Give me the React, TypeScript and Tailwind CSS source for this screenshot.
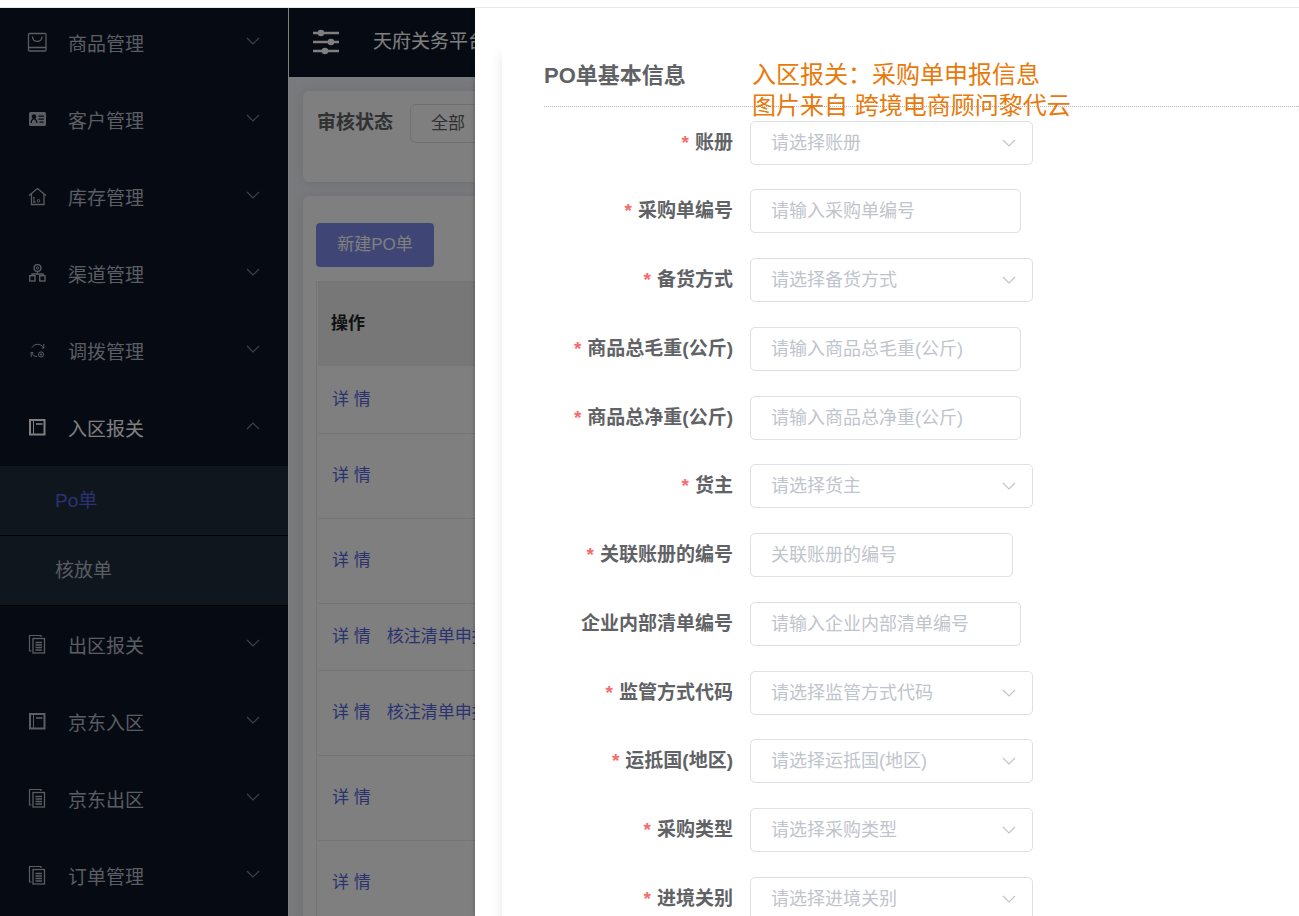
import { ReactNode } from "react";

type MenuItem = {
  label: string;
  icon: ReactNode;
  open?: boolean;
};

type Field = {
  id: string;
  label: string;
  placeholder: string;
  type: "select" | "input";
  required?: boolean;
  short?: boolean;
};

const Icon = ({ children }: { children: ReactNode }) => (
  <svg
    viewBox="0 0 20 20"
    className="mb-0.5 h-5 w-5 shrink-0"
    fill="none"
    stroke="currentColor"
    aria-hidden="true"
  >
    {children}
  </svg>
);

const BagIcon = () => (
  <Icon>
    <rect x="1.500" y="1.500" width="17.500" height="17.500" rx="1" strokeWidth="1.300" />
    <path d="M1.500 15.500h17.500M5.500 4.500c0 6.500 9.500 6.500 9.500 0" strokeWidth="1.300" />
  </Icon>
);

const CardIcon = () => (
  <Icon>
    <path
      fill="currentColor"
      stroke="none"
      fillRule="evenodd"
      d="M3.500 3h14a1.500 1.500 0 0 1 1.500 1.500v11a1.500 1.500 0 0 1-1.500 1.500h-14a1.500 1.500 0 0 1-1.500-1.500v-11A1.500 1.500 0 0 1 3.500 3zM7 5.200a2.300 2.300 0 0 0-1.300 4.200C4.500 10.200 3.500 12 3.500 14h1.300c0-2.300 1-3.600 2.200-3.600s2.200 1.300 2.200 3.600h1.300c0-2-1-3.800-2.200-4.600A2.300 2.300 0 0 0 7 5.200zM11.500 6.500v1.200H17V6.500zM11.500 9.500v1.200H17V9.500zM12.500 12.500v1.200h4v-1.200z"
    />
  </Icon>
);

const HouseIcon = () => (
  <Icon>
    <path d="M2 9.500L10.500 2.500 19 9.500M4.500 8v10.500h12.500V8" strokeWidth="1.300" />
    <path d="M7 11v5.500M6 11.500h1M6 16h3" />
    <circle cx="11.500" cy="14.800" r="1.300" />
  </Icon>
);

const ChannelIcon = () => (
  <Icon>
    <circle cx="10.500" cy="5" r="3.400" strokeWidth="1.400" />
    <circle cx="10.500" cy="5" r="1.200" />
    <path d="M10.500 8.500V11M5 13v-2h11v2" strokeWidth="1.400" />
    <rect x="2.700" y="12.700" width="5.300" height="5.300" strokeWidth="1.400" />
    <rect x="12.700" y="12.700" width="5.300" height="5.300" strokeWidth="1.400" />
  </Icon>
);

const TransferIcon = () => (
  <Icon>
    <path d="M5 7.500a6.800 6.800 0 0 1 11.500 0M16.800 4v4.300M10 16.800a6.500 6.500 0 0 1-5.500-4.300M4.200 17v-5M4.200 12.500h2M14.800 8h2" />
    <circle cx="14" cy="14.500" r="2.600" />
    <circle cx="14" cy="14.500" r="0.800" />
  </Icon>
);

const BookIcon = () => (
  <Icon>
    <rect x="3" y="3" width="14.500" height="14.500" strokeWidth="2" />
    <path d="M6.500 3v14.500" strokeWidth="1" />
    <path d="M9 7h6.500" strokeWidth="1.600" />
  </Icon>
);

const CopyIcon = () => (
  <Icon>
    <path d="M14 3V1.500H2.500V17h2" strokeWidth="1.200" />
    <rect x="6" y="4.500" width="11.500" height="14.500" strokeWidth="1.300" />
    <path d="M8.500 8.500h6.500M8.500 11h6.500M8.500 13.500h6.500M8.500 16h6.500" strokeWidth="1.300" />
  </Icon>
);

const SlidersIcon = () => (
  <svg
    viewBox="0 0 26 26"
    className="mb-0.5 h-[26px] w-[26px]"
    aria-hidden="true"
  >
    <path
      d="M0 4h26M0 13h26M0 22h26"
      stroke="currentColor"
      strokeWidth="2.500"
    />
    <circle cx="8" cy="4" r="3.300" fill="currentColor" />
    <circle cx="18" cy="13" r="3.300" fill="currentColor" />
    <circle cx="12" cy="22" r="3.300" fill="currentColor" />
  </svg>
);

const Chevron = ({ className }: { className: string }) => (
  <svg
    viewBox="0 0 14 8"
    className={className}
    fill="none"
    stroke="currentColor"
    aria-hidden="true"
  >
    <path d="M1 1l6 6 6-6" strokeWidth="1.200" />
  </svg>
);

const menuTop: MenuItem[] = [
  { label: "商品管理", icon: <BagIcon /> },
  { label: "客户管理", icon: <CardIcon /> },
  { label: "库存管理", icon: <HouseIcon /> },
  { label: "渠道管理", icon: <ChannelIcon /> },
  { label: "调拨管理", icon: <TransferIcon /> },
  { label: "入区报关", icon: <BookIcon />, open: true },
];

const menuBottom: MenuItem[] = [
  { label: "出区报关", icon: <CopyIcon /> },
  { label: "京东入区", icon: <BookIcon /> },
  { label: "京东出区", icon: <CopyIcon /> },
  { label: "订单管理", icon: <CopyIcon /> },
];

const rows = [
  { tall: false, declare: false },
  { tall: true, declare: false },
  { tall: true, declare: false },
  { tall: false, declare: true },
  { tall: true, declare: true },
  { tall: true, declare: false },
  { tall: true, declare: false },
];

const fields: Field[] = [
  { id: "book", label: "账册", placeholder: "请选择账册", type: "select", required: true },
  { id: "poNo", label: "采购单编号", placeholder: "请输入采购单编号", type: "input", required: true },
  { id: "stockMode", label: "备货方式", placeholder: "请选择备货方式", type: "select", required: true },
  { id: "gross", label: "商品总毛重(公斤)", placeholder: "请输入商品总毛重(公斤)", type: "input", required: true },
  { id: "net", label: "商品总净重(公斤)", placeholder: "请输入商品总净重(公斤)", type: "input", required: true },
  { id: "owner", label: "货主", placeholder: "请选择货主", type: "select", required: true },
  { id: "linkedBook", label: "关联账册的编号", placeholder: "关联账册的编号", type: "input", required: true, short: true },
  { id: "innerNo", label: "企业内部清单编号", placeholder: "请输入企业内部清单编号", type: "input" },
  { id: "supervise", label: "监管方式代码", placeholder: "请选择监管方式代码", type: "select", required: true },
  { id: "country", label: "运抵国(地区)", placeholder: "请选择运抵国(地区)", type: "select", required: true },
  { id: "poType", label: "采购类型", placeholder: "请选择采购类型", type: "select", required: true },
  { id: "customs", label: "进境关别", placeholder: "请选择进境关别", type: "select", required: true },
];

const MenuRow = ({ item }: { item: MenuItem }) => (
  <button
    type="button"
    className={`flex h-[77px] w-full shrink-0 items-center pr-7 pl-[27px] text-left text-[19px] ${
      item.open ? "text-white" : "text-[#b4bac6]"
    }`}
  >
    {item.icon}
    <span className="ml-[21px] flex-1 pt-1.5">{item.label}</span>
    <Chevron
      className={`mb-1 h-2 w-3.5 text-[#80838c] ${item.open ? "rotate-180" : ""}`}
    />
  </button>
);

const Sidebar = () => (
  <nav className="w-72 shrink-0 overflow-hidden bg-[#0c1424]">
    <div className="-mt-1 flex flex-col">
      {menuTop.map((item) => (
        <MenuRow key={item.label} item={item} />
      ))}
      <div className="bg-[#1f2d3a] text-[19px]">
        <a
          href="#po"
          className="flex h-[70px] items-center border-b border-black pt-0.5 pl-[55px] text-[#5566e0]"
        >
          Po单
        </a>
        <a
          href="#release"
          className="flex h-[70px] items-center border-b border-black pt-0.5 pl-[55px] text-[#b4bac6]"
        >
          核放单
        </a>
      </div>
      {menuBottom.map((item) => (
        <MenuRow key={item.label} item={item} />
      ))}
    </div>
  </nav>
);

const Content = () => (
  <div className="flex min-w-0 flex-1 flex-col border-l border-white bg-[#f3f4fa]">
    <header className="flex h-[69px] shrink-0 items-center bg-[#0c1424] pl-6 text-white">
      <button type="button" aria-label="菜单">
        <SlidersIcon />
      </button>
      <h1 className="ml-[34px] text-[19px] whitespace-nowrap">天府关务平台</h1>
    </header>

    <main className="flex flex-1 flex-col gap-3.5 pt-3.5 pl-3.5">
      <section className="flex h-[91px] shrink-0 items-start rounded-md bg-white pt-[13px] pl-3.5 shadow-[0_0_12px_rgba(0,0,0,0.1)]">
        <label
          htmlFor="status"
          className="flex h-[39px] items-center text-[19px] font-bold text-[#606266]"
        >
          审核状态
        </label>
        <select
          id="status"
          className="ml-[17px] h-[39px] w-60 appearance-none rounded-md border border-[#dcdfe6] pl-5 text-[17px] text-[#606266]"
        >
          <option>全部</option>
        </select>
      </section>

      <section className="flex-1 rounded-md bg-white pt-[27px] pl-[13px] shadow-[0_0_12px_rgba(0,0,0,0.1)]">
        <button
          type="button"
          className="h-11 w-[118px] rounded bg-[#7f8cea] text-[17px] text-white"
        >
          新建PO单
        </button>
        <div className="mt-3.5 border-t border-l border-[#e8eaf2] pl-px">
          <table className="w-full border-collapse text-left text-[17px]">
            <thead>
              <tr className="h-[84px] bg-[#eeeeee]">
                <th className="pl-[13px] font-bold text-[#222222]">操作</th>
              </tr>
            </thead>
            <tbody>
              {rows.map((row, i) => (
                <tr
                  key={i}
                  className={`border-b border-[#e8eaf2] text-[#5566e0] ${
                    row.tall ? "h-[85px]" : "h-[67px]"
                  }`}
                >
                  <td className="pt-px pl-3.5 whitespace-nowrap">
                    <a href="#detail">详 情</a>
                    {row.declare && (
                      <a href="#declare" className="ml-4">
                        核注清单申报
                      </a>
                    )}
                  </td>
                </tr>
              ))}
            </tbody>
          </table>
        </div>
      </section>
    </main>
  </div>
);

const FormRow = ({ field }: { field: Field }) => (
  <div className="mb-[25px] flex h-11 shrink-0 items-center gap-[17px] nth-[4n+1]:mb-6">
    <label
      htmlFor={field.id}
      className="w-[189px] text-right text-[19px] font-bold whitespace-nowrap text-[#606266]"
    >
      {field.required && <span className="mr-1.5 text-[#f56c6c]">*</span>}
      {field.label}
    </label>
    {field.type === "select" ? (
      <div className="relative">
        <select
          id={field.id}
          className="h-11 w-[283px] appearance-none rounded-[5px] border border-[#dcdfe6] bg-white px-5 text-[18px] text-[#c0c4cc]"
        >
          <option>{field.placeholder}</option>
        </select>
        <Chevron className="pointer-events-none absolute top-[18px] right-[17px] h-2 w-3.5 text-[#c0c4cc]" />
      </div>
    ) : (
      <input
        id={field.id}
        placeholder={field.placeholder}
        className={`h-11 rounded-[5px] border border-[#dcdfe6] bg-white px-5 text-[18px] placeholder:text-[#c0c4cc] ${
          field.short ? "w-[263px]" : "w-[271px]"
        }`}
      />
    )}
  </div>
);

const Drawer = () => (
  <div className="absolute inset-0 flex overflow-hidden bg-black/50 pl-[475px]">
    <div
      role="dialog"
      aria-label="PO单基本信息"
      className="flex flex-1 overflow-hidden bg-white pt-9 pl-[27px] shadow-[0_0_4px_rgba(0,0,0,0.3)]"
    >
      <div className="relative flex-1 pl-[42px] shadow-[0_10px_12px_rgba(0,0,0,0.1)]">
        <h2 className="flex h-[63px] items-center border-b border-dotted border-[#b4b4b4] text-[22px] font-bold text-[#606266]">
          PO单基本信息
        </h2>
        <form className="flex flex-col pt-3.5">
          {fields.map((field) => (
            <FormRow key={field.id} field={field} />
          ))}
        </form>
        {/** note over the form */}
        <p className="absolute top-[15px] left-[250px] text-2xl leading-[31px] whitespace-nowrap text-[#e8790b]">
          入区报关：采购单申报信息
          <br />
          图片来自 跨境电商顾问黎代云
        </p>
      </div>
    </div>
  </div>
);

export default function App() {
  return (
    <div className="flex h-screen flex-col overflow-hidden bg-white pt-[7px] font-['Liberation_Sans','Noto_Sans_CJK_SC',sans-serif]">
      <div className="relative flex min-h-0 flex-1 border-t border-[#e8e8ec]">
        <Sidebar />
        <Content />
        <Drawer />
      </div>
    </div>
  );
}
